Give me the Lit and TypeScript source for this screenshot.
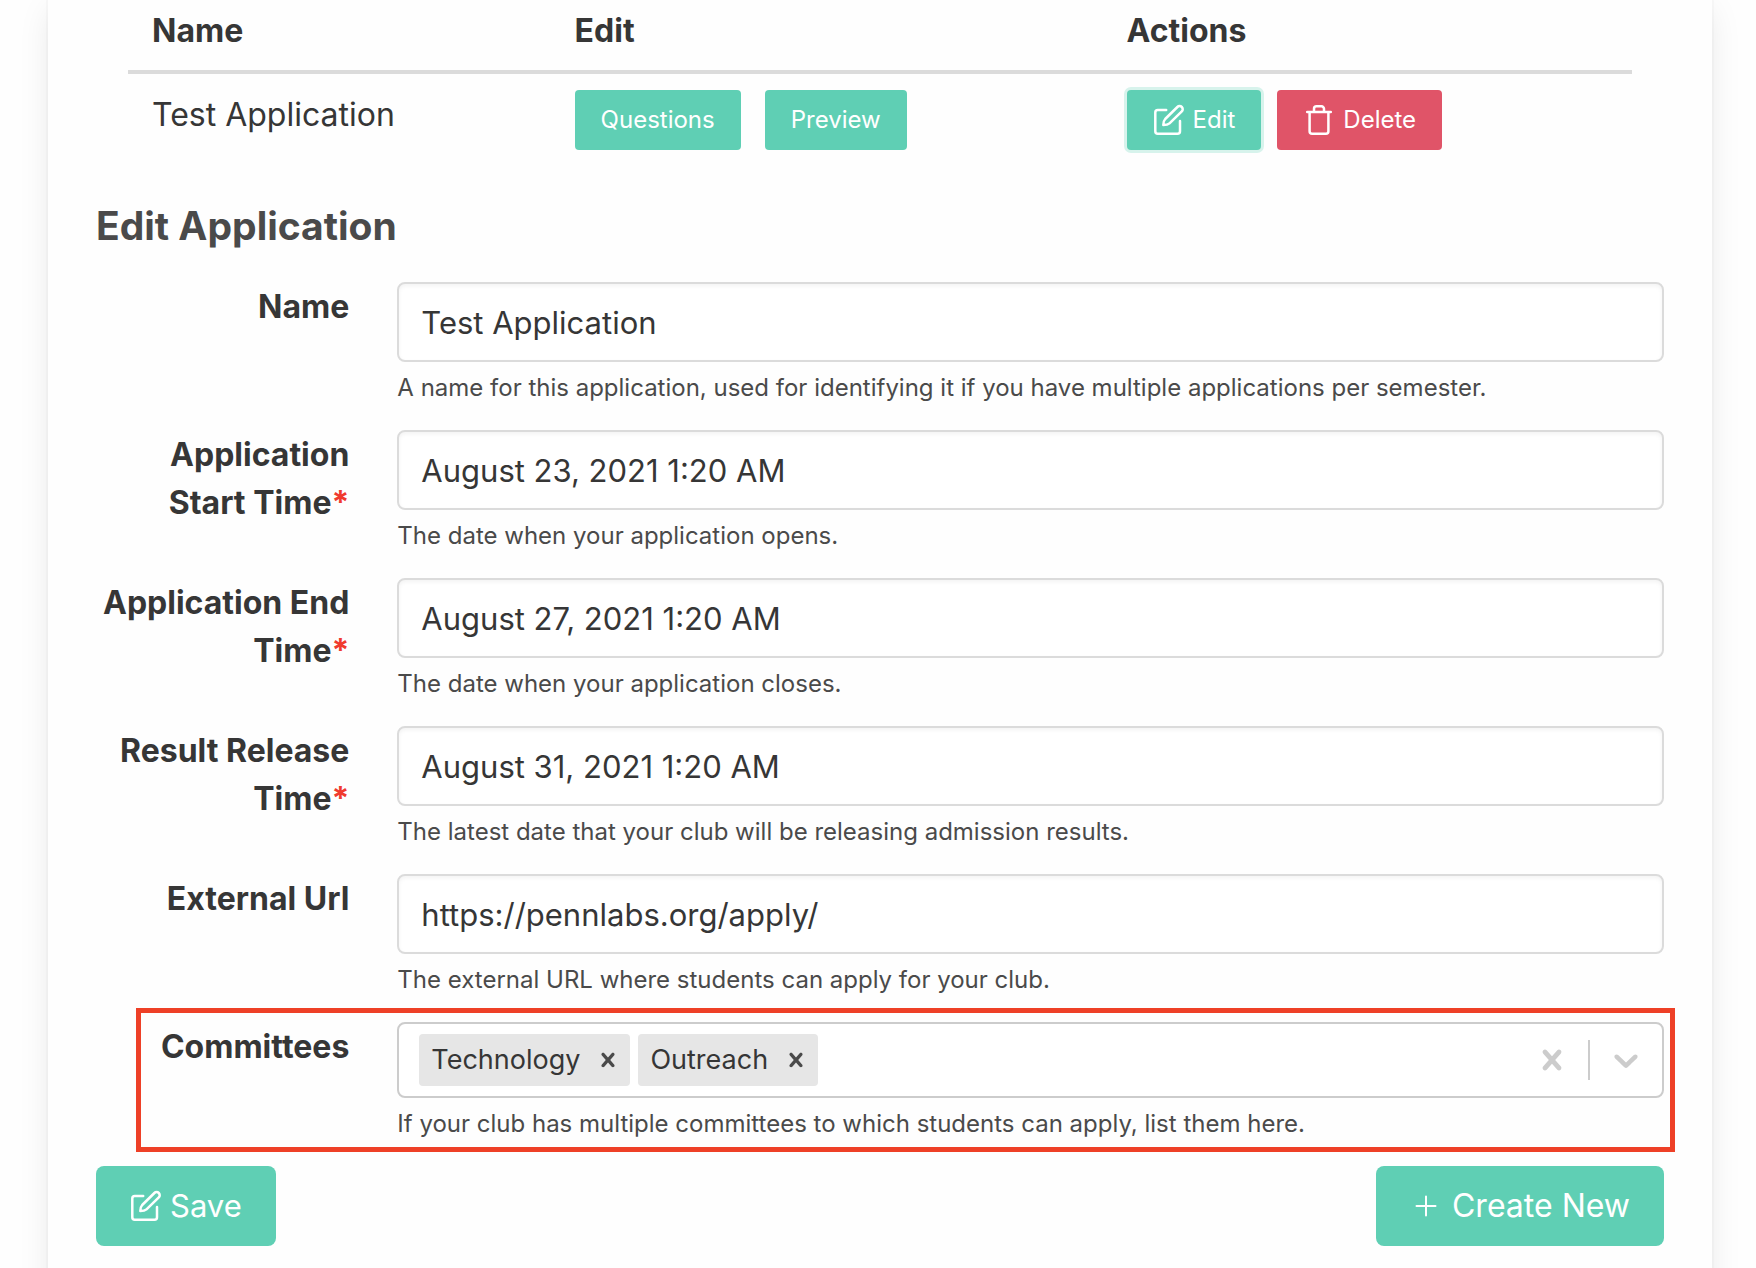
import { LitElement, html, css, svg } from "lit";
import { customElement } from "lit/decorators.js";

const editIcon = html`<svg class="icon" viewBox="0 0 32 32" aria-hidden="true">
  <path d="M13.200 6H4.800A2.500 2.500 0 0 0 2.300 8.500V27.200A2.500 2.500 0 0 0 4.800 29.700H24.500A2.500 2.500 0 0 0 27 27.200V17" />
  <path d="M24.400 3a3.100 3.100 0 0 1 4.400 4.400L16.500 19.300C15 20.700 13 21.100 10.300 21.100C10.300 18.400 10.900 16.400 12.200 15z" />
</svg>`;
const trashIcon = html`<svg class="icon" viewBox="0 0 32 32" aria-hidden="true">
  <path d="M4.200 8H27.800M25.400 8V27.200a2.500 2.500 0 0 1-2.500 2.500H9.100a2.500 2.500 0 0 1-2.500-2.500V8M11 8V4.800a2.500 2.500 0 0 1 2.500-2.500h5A2.500 2.500 0 0 1 21 4.800V8" />
</svg>`;
const plusIcon = html`<svg class="icon plus" viewBox="0 0 32 32" aria-hidden="true">
  <path d="M16 6.500V25.500M6.500 16H25.500" />
</svg>`;
const crossPath = svg`<path d="M14.348 14.849c-0.469 0.469-1.229 0.469-1.697 0l-2.651-3.030-2.651 3.029c-0.469 0.469-1.229 0.469-1.697 0-0.469-0.469-0.469-1.229 0-1.697l2.758-3.15-2.759-3.152c-0.469-0.469-0.469-1.228 0-1.697s1.228-0.469 1.697 0l2.652 3.031 2.651-3.031c0.469-0.469 1.228-0.469 1.697 0s0.469 1.229 0 1.697l-2.758 3.152 2.758 3.15c0.469 0.469 0.469 1.229 0 1.698z" />`;
const chevronPath = svg`<path d="M4.516 7.548c0.436-0.446 1.043-0.481 1.576 0l3.908 3.747 3.908-3.747c0.533-0.481 1.141-0.446 1.574 0 0.436 0.445 0.408 1.197 0 1.615-0.406 0.418-4.695 4.502-4.695 4.502-0.217 0.223-0.502 0.335-0.787 0.335s-0.57-0.112-0.789-0.335c0 0-4.287-4.084-4.695-4.502s-0.436-1.17 0-1.615z" />`;

interface Field {
  id: string;
  label: string;
  required: boolean;
  value: string;
  help: string;
}

const fields: Field[] = [
  { id: "name", label: "Name", required: false, value: "Test Application", help: "A name for this application, used for identifying it if you have multiple applications per semester." },
  { id: "start", label: "Application Start Time", required: true, value: "August 23, 2021 1:20 AM", help: "The date when your application opens." },
  { id: "end", label: "Application End Time", required: true, value: "August 27, 2021 1:20 AM", help: "The date when your application closes." },
  { id: "release", label: "Result Release Time", required: true, value: "August 31, 2021 1:20 AM", help: "The latest date that your club will be releasing admission results." },
  { id: "url", label: "External Url", required: false, value: "https://pennlabs.org/apply/", help: "The external URL where students can apply for your club." },
];

@customElement("app-root")
export class AppRoot extends LitElement {
  static styles = css`
    :host {
      display: block;
      overflow: hidden;
      font-family: Inter, "Liberation Sans", sans-serif;
      font-size: 32px;
      line-height: 48px;
      color: #363636;
      background: #fefefe;
    }
    * { box-sizing: border-box; }
    button, input { font: inherit; color: inherit; margin: 0; }
    .card {
      margin: 0 44px 0 48px;
      padding: 0 48px 64px;
      background: #fefefe;
      box-shadow: 0 16px 32px -4px rgba(10, 10, 10, 0.1), 0 0 0 2px rgba(10, 10, 10, 0.02);
    }
    .table-wrap { margin: -10px 32px 0; }
    .apps { width: 100%; border-collapse: collapse; table-layout: fixed; line-height: 50px; }
    .apps th { padding: 16px 24px 14px; text-align: left; font-weight: 700; border-bottom: 4px solid #dbdbdb; }
    .apps td { padding: 16px 24px; vertical-align: top; }
    .col-name { width: 28.1%; }
    .col-edit { width: 36.7%; }
    .buttons { display: flex; gap: 16px; }
    .buttons.wide { gap: 24px; }
    .btn {
      display: inline-flex;
      align-items: center;
      justify-content: center;
      gap: 8px;
      height: 80px;
      padding: 0 34px;
      border: 0;
      border-radius: 8px;
      background: #5fcfb4;
      color: #fff;
    }
    .btn.small { height: 60px; padding: 0 26px; border-radius: 4px; font-size: 24px; line-height: 36px; }
    .btn.save { font-size: 31px; }
    .btn.create { gap: 10px; }
    .btn.danger { background: #e05468; }
    .btn.focused { box-shadow: 0 0 0 3px #d7f3ec; }
    .icon { width: 32px; height: 32px; fill: none; stroke: currentColor; stroke-width: 2.5; stroke-linecap: round; stroke-linejoin: round; }
    .icon.plus { stroke-width: 2; }
    h2 { margin: 36px 0 32px; font-size: 39px; line-height: 48px; font-weight: 700; color: #4a4a4a; }
    .field { position: relative; display: grid; grid-template-columns: 1fr 5fr; column-gap: 48px; margin-bottom: 24px; }
    .label { padding-top: 1px; font-weight: 700; text-align: right; }
    .required { color: #f03a2e; }
    .input {
      display: block;
      width: 100%;
      height: 80px;
      padding: 0 22px;
      border: 2px solid #dbdbdb;
      border-radius: 8px;
      background: #fff;
      box-shadow: inset 0 2px 4px rgba(10, 10, 10, 0.05);
      font-size: 31px;
    }
    .help { margin: 8px 0 0; font-size: 24px; line-height: 36px; color: #4a4a4a; }
    .select { display: flex; align-items: center; height: 76px; border: 2px solid #ccc; border-radius: 8px; background: #fff; }
    .values { display: flex; flex: 1; gap: 8px; padding-left: 20px; min-width: 0; }
    .chip { display: flex; align-items: center; gap: 6px; height: 52px; padding-left: 12px; border-radius: 4px; background: #e6e6e6; font-size: 27px; line-height: 40px; }
    .combo { flex: 1; min-width: 0; border: 0; outline: 0; background: none; }
    .plain { display: flex; padding: 0; border: 0; background: none; color: #ccc; }
    .plain svg { width: 40px; height: 40px; fill: currentColor; }
    .remove { padding: 0 8px; color: #4a4a4a; }
    .remove svg { width: 28px; height: 28px; }
    .indicator { padding: 16px; }
    .separator { width: 2px; height: 40px; background: #ccc; }
    .highlight { position: absolute; inset: -14px -11px -10px 40px; border: 5px solid #ee4027; pointer-events: none; }
    .footer { display: flex; justify-content: space-between; }
  `;

  private renderField(f: Field) {
    return html`<div class="field">
      <label class="label" for=${f.id}>${f.label}${f.required ? html`<span class="required">*</span>` : ""}</label>
      <div>
        <input class="input" id=${f.id} type="text" .value=${f.value} aria-describedby="${f.id}-help" />
        <p class="help" id="${f.id}-help">${f.help}</p>
      </div>
    </div>`;
  }

  render() {
    return html`<main class="card">
      <div class="table-wrap">
        <table class="apps">
          <thead>
            <tr><th class="col-name">Name</th><th class="col-edit">Edit</th><th>Actions</th></tr>
          </thead>
          <tbody>
            <tr>
              <td>Test Application</td>
              <td><div class="buttons wide">
                <button class="btn small">Questions</button>
                <button class="btn small">Preview</button>
              </div></td>
              <td><div class="buttons">
                <button class="btn small focused">${editIcon}Edit</button>
                <button class="btn small danger">${trashIcon}Delete</button>
              </div></td>
            </tr>
          </tbody>
        </table>
      </div>
      <h2>Edit Application</h2>
      <form @submit=${(e: Event) => e.preventDefault()}>
        ${fields.map((f) => this.renderField(f))}
        <div class="field">
          <label class="label" for="committees">Committees</label>
          <div>
            <div class="select">
              <div class="values">
                ${["Technology", "Outreach"].map((c) => html`<span class="chip">${c}<button class="plain remove" type="button" aria-label="Remove ${c}"><svg viewBox="0 0 20 20">${crossPath}</svg></button></span>`)}
                <input class="combo" id="committees" type="text" aria-describedby="committees-help" />
              </div>
              <button class="plain indicator" type="button" aria-label="Clear"><svg viewBox="0 0 20 20">${crossPath}</svg></button>
              <span class="separator"></span>
              <button class="plain indicator" type="button" aria-label="Open"><svg viewBox="0 0 20 20">${chevronPath}</svg></button>
            </div>
            <p class="help" id="committees-help">If your club has multiple committees to which students can apply, list them here.</p>
          </div>
          <div class="highlight"></div>
        </div>
        <div class="footer">
          <button class="btn save" type="submit">${editIcon}Save</button>
          <button class="btn create" type="button">${plusIcon}Create New</button>
        </div>
      </form>
    </main>`;
  }
}
